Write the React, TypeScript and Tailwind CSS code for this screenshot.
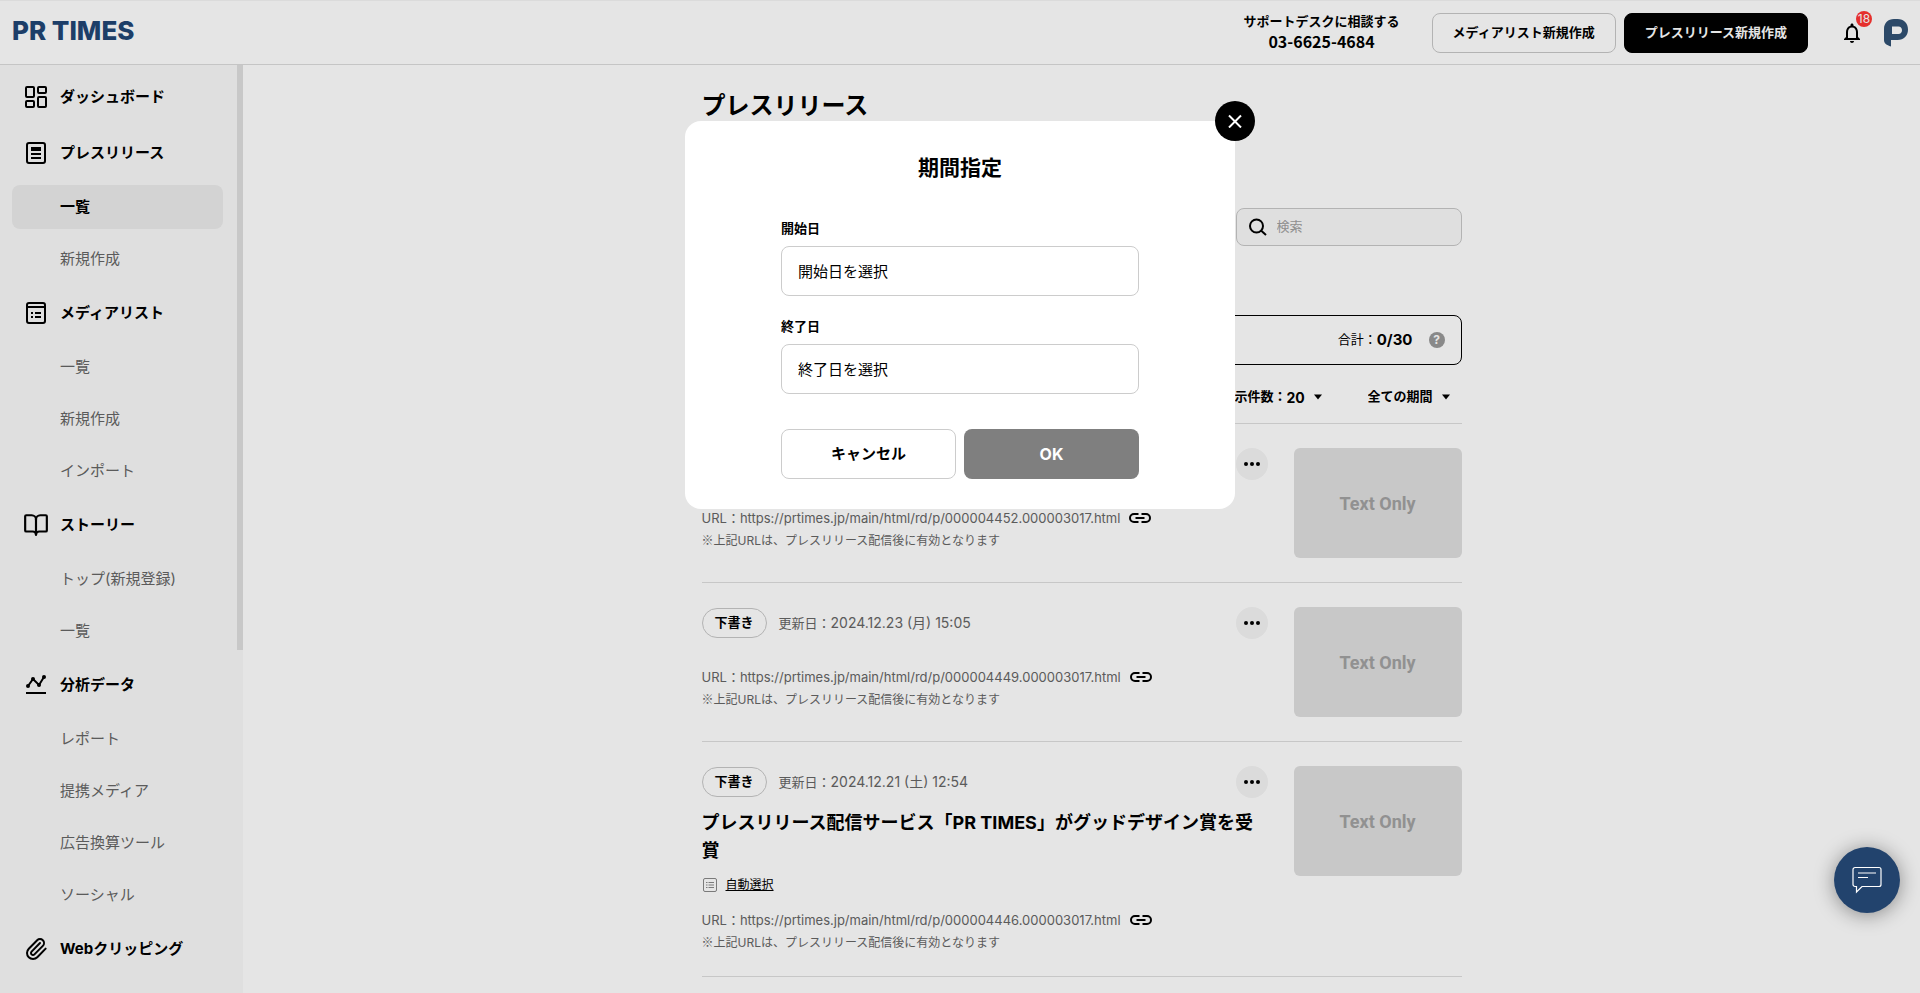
import React from 'react';
import { BookOpen, Paperclip } from 'lucide-react';
import clsx from 'clsx';

function DashboardIcon() {
  return (
    <svg width="24" height="24" viewBox="0 0 24 24" fill="none" stroke="currentColor" strokeWidth="2">
      <rect x="2" y="2" width="8" height="10" rx="1" />
      <rect x="14" y="2" width="8" height="6" rx="1" />
      <rect x="2" y="16" width="8" height="6" rx="1" />
      <rect x="14" y="12" width="8" height="10" rx="1" />
    </svg>
  );
}

function ReleaseIcon() {
  return (
    <svg width="24" height="24" viewBox="0 0 24 24" fill="none" stroke="currentColor" strokeWidth="2">
      <rect x="3" y="2" width="18" height="20" rx="2" />
      <rect x="7" y="6" width="10" height="4" fill="currentColor" stroke="none" />
      <path d="M7 13h10M7 17h10" />
    </svg>
  );
}

function MediaListIcon() {
  return (
    <svg width="24" height="24" viewBox="0 0 24 24" fill="none" stroke="currentColor" strokeWidth="2">
      <rect x="3" y="2" width="18" height="20" rx="2" />
      <path d="M3 6h18M7 12h2M11 12h6M7 16h2M11 16h6" />
    </svg>
  );
}

function ChartIcon() {
  return (
    <svg width="24" height="24" viewBox="0 0 24 24" fill="none" stroke="currentColor" strokeWidth="2">
      <path d="M4 13l5-7 6 6 5-8" />
      <g fill="currentColor" stroke="none">
        <circle cx="4" cy="13" r="2" />
        <circle cx="9" cy="6" r="2" />
        <circle cx="15" cy="12" r="2" />
        <circle cx="20" cy="4" r="2" />
      </g>
      <path d="M2 20h20" />
    </svg>
  );
}

const sections = [
  { title: 'ダッシュボード', icon: <DashboardIcon />, items: [] },
  { title: 'プレスリリース', icon: <ReleaseIcon />, items: ['一覧', '新規作成'], active: '一覧' },
  { title: 'メディアリスト', icon: <MediaListIcon />, items: ['一覧', '新規作成', 'インポート'] },
  { title: 'ストーリー', icon: <BookOpen size={26} strokeWidth={2} />, items: ['トップ(新規登録)', '一覧'] },
  {
    title: '分析データ',
    icon: <ChartIcon />,
    items: ['レポート', '提携メディア', '広告換算ツール', 'ソーシャル'],
  },
  { title: 'Webクリッピング', icon: <Paperclip size={24} strokeWidth={2} />, items: [] },
];

const releases = [
  { id: '000004452' },
  { id: '000004449', date: '2024.12.23 (月) 15:05' },
  {
    id: '000004446',
    date: '2024.12.21 (土) 12:54',
    title: 'プレスリリース配信サービス「PR TIMES」がグッドデザイン賞を受賞',
    media: '自動選択',
  },
];

function Header() {
  return (
    <header className="flex h-[65px] items-center justify-between border-t border-b border-t-[#f4f4f4] border-b-[#dcdcdc] bg-white px-3">
      <a href="#" className="pb-1 text-[26px] leading-8 font-extrabold text-[#214674]">
        PR TIMES
      </a>
      <div className="flex items-center">
        <div className="pb-1 text-center text-[13px] leading-5 font-bold">
          <p>サポートデスクに相談する</p>
          <p className="font-['Noto_Sans_CJK_JP',sans-serif] text-[16px] leading-5">03-6625-4684</p>
        </div>
        <button className="ml-8 h-10 rounded-lg border border-[#c8c8c8] bg-white px-5 text-[13px] font-bold">
          メディアリスト新規作成
        </button>
        <button className="ml-2 h-10 rounded-lg border border-black bg-black px-5 text-[13px] font-bold text-white">
          プレスリリース新規作成
        </button>
        <button aria-label="お知らせ" className="relative ml-8">
          <svg width="24" height="24" viewBox="0 0 24 24" fill="currentColor">
            <path d="M12 22c1.100 0 2-.9 2-2h-4c0 1.100.9 2 2 2zm6-6v-5c0-3.070-1.630-5.640-4.500-6.320V4c0-.83-.67-1.500-1.500-1.500s-1.500.67-1.500 1.500v.68C7.640 5.360 6 7.920 6 11v5l-2 2v1h16v-1l-2-2zm-2 1H8v-6c0-2.480 1.510-4.500 4-4.500s4 2.020 4 4.500v6z" />
          </svg>
          <span className="absolute -top-2.5 left-4 flex size-4 items-center justify-center rounded-full bg-[#ff3531] text-[12px] leading-4 text-white">
            18
          </span>
        </button>
        <a href="#" aria-label="アカウント" className="ml-5">
          <svg width="24" height="28" viewBox="0 0 24 28" fill="#315274" fillRule="evenodd">
            <path d="M0 10C0 4 4 0 10 0h3.500C20 0 24 4.500 24 10.500S20 21 13.500 21H7v6.500C2.500 26 0 24.500 0 21zM8 7.500V15h6.500c2 0 3.500-1.600 3.500-3.700s-1.500-3.800-3.500-3.800z" />
          </svg>
        </a>
      </div>
    </header>
  );
}

function Sidebar() {
  return (
    <aside className="flex w-[243px] shrink-0 bg-[#f9f9f9]">
      <nav className="flex flex-1 flex-col gap-2 pt-2 pr-[14px] pb-2 pl-3 text-[15px]">
        {sections.map((section) => (
          <React.Fragment key={section.title}>
            <a href="#" className="flex h-12 items-center font-bold">
              <span className="flex w-12 justify-center">{section.icon}</span>
              {section.title}
            </a>
            {section.items.map((item) => (
              <a
                key={item}
                href="#"
                className={clsx(
                  'flex h-11 items-center rounded-lg pl-12',
                  item === section.active ? 'bg-[#ebebeb] font-bold' : 'text-[#666]'
                )}
              >
                {item}
              </a>
            ))}
          </React.Fragment>
        ))}
      </nav>
      {/* Scroll thumb */}
      <div className="h-[63%] w-1.5 bg-[#dfdfdf]" />
    </aside>
  );
}

function Caret() {
  return (
    <svg width="8" height="6" viewBox="0 0 8 6" className="pointer-events-none">
      <path d="M0 .5h8L4 5.500z" />
    </svg>
  );
}

type Release = { id: string; date?: string; title?: string; media?: string };

function ReleaseRow({ id, date, title, media }: Release) {
  return (
    <article className="flex gap-[26px] border-b border-[#dedede] py-6">
      <div className="min-w-0 flex-1 text-[#666]">
        <div className="flex h-8 items-center">
          {date && (
            <>
              <span className="mr-3 flex h-[30px] w-[65px] items-center justify-center rounded-full border border-[#c8c8c8] text-[13px] font-bold text-black">
                下書き
              </span>
              <span className="text-[13px]">
                更新日：<time className="text-[14px]">{date}</time>
              </span>
            </>
          )}
          <button aria-label="メニュー" className="ml-auto flex size-8 items-center justify-center rounded-full bg-[#f4f4f4]">
            <svg width="16" height="4" viewBox="0 0 16 4">
              <circle cx="2" cy="2" r="2" />
              <circle cx="8" cy="2" r="2" />
              <circle cx="14" cy="2" r="2" />
            </svg>
          </button>
        </div>
        <div className="pt-[11px]">
          {title && <h2 className="text-[18px] leading-7 font-bold text-black">{title}</h2>}
          {media && (
            <a href="#" className="mt-3 flex h-4 items-center gap-2 text-[12px] text-black underline">
              <svg width="16" height="16" viewBox="0 0 16 16" fill="none" stroke="#888">
                <rect x="1.500" y="1.500" width="13" height="13" rx="1.500" />
                <path d="M4 5.500h1.500M6.500 5.500H12M4 8h1.500M6.500 8H12M4 10.500h1.500M6.500 10.500H12" />
              </svg>
              {media}
            </a>
          )}
        </div>
        <p className="mt-[18px] flex items-center gap-2 text-[13px] leading-[18px]">
          URL：https://prtimes.jp/main/html/rd/p/{id}.000003017.html
          <svg width="24" height="16" viewBox="0 0 24 16" fill="none" stroke="#000" strokeWidth="2">
            <path d="M10.500 4H6a4 4 0 0 0 0 8h4.500M13.500 4H18a4 4 0 0 1 0 8h-4.500M7.500 8h9" />
          </svg>
        </p>
        <p className="mt-1 text-[12px] leading-[18px]">
          <span className="font-['Noto_Sans_CJK_JP',sans-serif]">※</span>
          上記URLは、プレスリリース配信後に有効となります
        </p>
      </div>
      <div className="flex h-[110px] w-[168px] items-center justify-center rounded-md bg-[#dfdfdf] font-[Roboto] text-[18px] font-bold text-[#a2a2a2]">
        Text Only
      </div>
    </article>
  );
}

function Main() {
  return (
    <main className="flex-1 px-8 pt-[25px]">
      <div className="mx-auto max-w-[760px]">
        <h1 className="text-[24px] leading-8 font-bold">プレスリリース</h1>
        <label className="mt-[86px] ml-auto flex h-[38px] w-[226px] items-center gap-2.5 rounded-lg border border-[#c8c8c8] bg-[#f9f9f9] px-3">
          <svg width="18" height="18" viewBox="0 0 18 18" fill="none" stroke="#000" strokeWidth="2" className="shrink-0">
            <circle cx="7.500" cy="8" r="6.500" />
            <path d="M12 12.500l5 4.500" />
          </svg>
          <input
            type="search"
            placeholder="検索"
            aria-label="検索"
            className="w-full text-[13px] outline-none placeholder:text-[#a0a0a0]"
          />
        </label>
        <div className="mt-[69px] flex h-[50px] items-center justify-end rounded-lg border border-black px-4">
          <span className="text-[13px]">合計：</span>
          <strong className="text-[15px]">0/30</strong>
          <span className="ml-4 flex size-4 items-center justify-center rounded-full bg-[#999] text-[12px] font-bold text-white">
            ?
          </span>
        </div>
        <div className="flex h-[59px] items-center justify-end gap-[46px] border-b border-[#dedede] pt-1.5 pr-3 text-[13px] font-bold">
          <div className="flex items-center">
            <label htmlFor="per-page">表示件数：</label>
            <select id="per-page" className="mr-2 appearance-none text-[14px]">
              <option>20</option>
            </select>
            <Caret />
          </div>
          <div className="flex items-center">
            <select aria-label="期間" className="mr-2 appearance-none">
              <option>全ての期間</option>
            </select>
            <Caret />
          </div>
        </div>
        {releases.map((release) => (
          <ReleaseRow key={release.id} {...release} />
        ))}
      </div>
    </main>
  );
}

function PeriodField({ id, label, placeholder }: { id: string; label: string; placeholder: string }) {
  return (
    <div>
      <label htmlFor={id} className="block text-[13px] leading-5 font-bold">
        {label}
      </label>
      <input
        id={id}
        type="text"
        placeholder={placeholder}
        className="mt-2 block h-[50px] w-full rounded-lg border border-[#ccc] px-4 text-[15px] placeholder:text-black"
      />
    </div>
  );
}

function PeriodDialog() {
  return (
    <div className="fixed inset-0 z-10 flex items-start justify-center bg-black/10 pt-[121px]">
      <div role="dialog" aria-labelledby="period-title" className="relative w-[550px] rounded-2xl bg-white px-24 pt-8 pb-[30px]">
        <button
          aria-label="閉じる"
          className="absolute -top-5 -right-5 flex size-10 items-center justify-center rounded-full bg-black"
        >
          <svg width="14" height="14" viewBox="0 0 14 14" stroke="#fff" strokeWidth="2">
            <path d="M1 1.500l12 12M13 1.500l-12 12" />
          </svg>
        </button>
        <h2 id="period-title" className="text-center text-[21px] leading-[30px] font-bold">
          期間指定
        </h2>
        <div className="mt-[35px] flex flex-col gap-5">
          <PeriodField id="start" label="開始日" placeholder="開始日を選択" />
          <PeriodField id="end" label="終了日" placeholder="終了日を選択" />
        </div>
        <div className="mt-[35px] grid grid-cols-2 gap-2 text-[15px] font-bold">
          <button className="h-[50px] rounded-lg border border-[#ccc] bg-white">キャンセル</button>
          <button className="h-[50px] rounded-lg bg-[#7f7f7f] text-[16px] text-white">OK</button>
        </div>
      </div>
    </div>
  );
}

export default function App() {
  return (
    <div className="flex min-h-screen flex-col bg-white font-[Inter,'Noto_Sans_CJK_JP',sans-serif] text-black" lang="ja">
      <Header />
      <div className="flex flex-1">
        <Sidebar />
        <Main />
      </div>
      <PeriodDialog />
      <button
        aria-label="チャット"
        className="fixed right-5 bottom-20 z-20 flex size-[66px] items-center justify-center rounded-full bg-[#22436d] shadow-[0_2px_20px_rgba(0,0,0,0.4)]"
      >
        <svg width="30" height="28" viewBox="0 0 30 28" fill="none" stroke="#fff" strokeWidth="1.200">
          <path d="M3 1.500h24a2 2 0 0 1 2 2v15a2 2 0 0 1-2 2H10L4.500 26v-5.500H3a2 2 0 0 1-2-2v-15a2 2 0 0 1 2-2z" />
          <path d="M6 7h18M6 11.500h10" />
        </svg>
      </button>
    </div>
  );
}
